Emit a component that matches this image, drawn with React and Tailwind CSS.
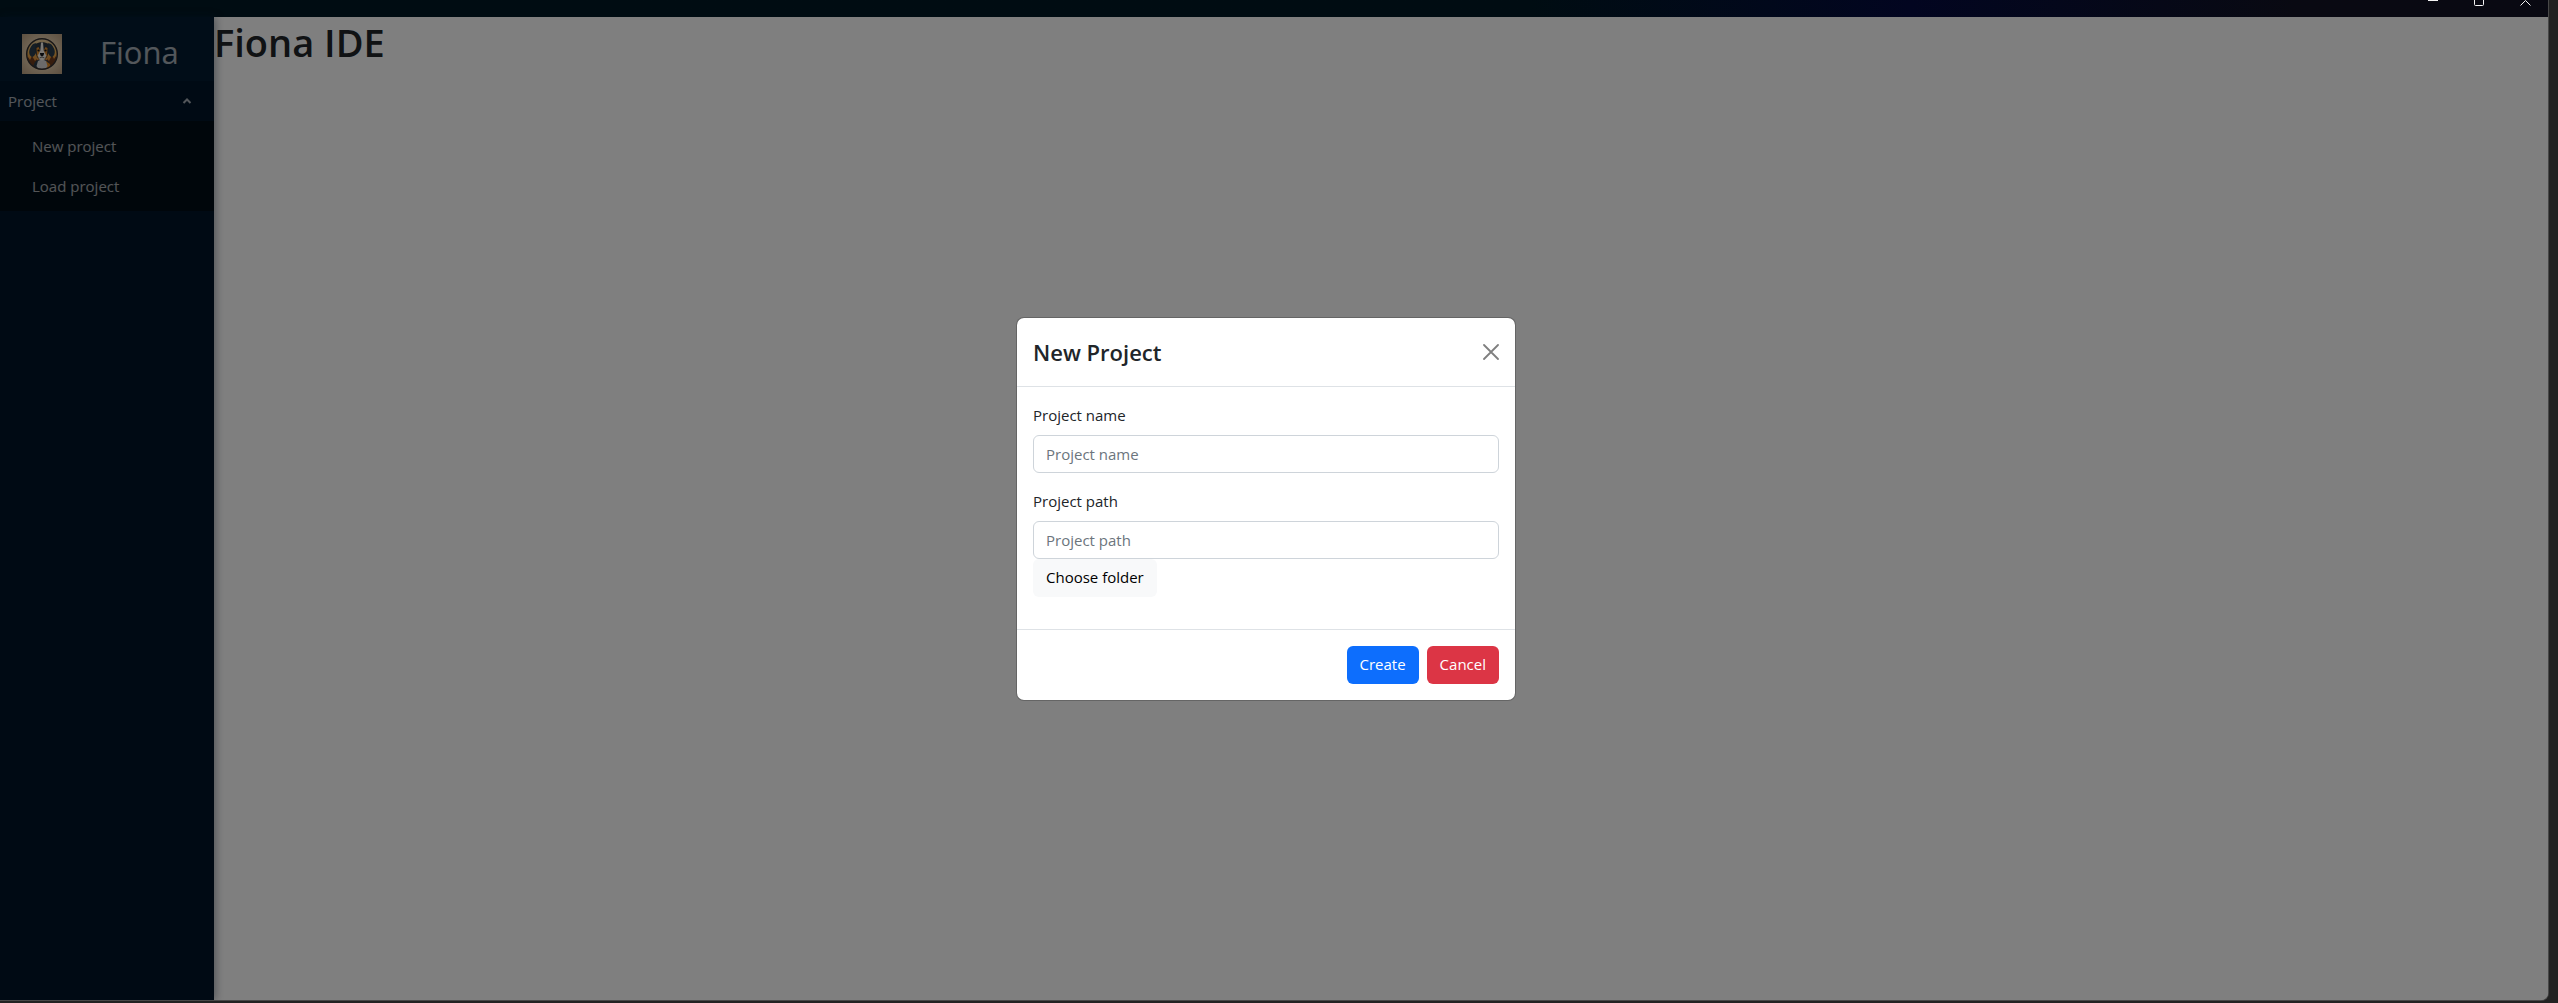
import React from "react";

function DogLogo() {
  return (
    <svg viewBox="0 0 40 40" className="size-10 shrink-0" role="img" aria-label="Fiona logo">
      <defs>
        <radialGradient id="paper" cx="50%" cy="50%" r="75%">
          <stop offset="0%" stopColor="#f0dabb" />
          <stop offset="55%" stopColor="#dcc4a4" />
          <stop offset="100%" stopColor="#b59a7c" />
        </radialGradient>
        <linearGradient id="sunset" x1="0" y1="0" x2="0" y2="1">
          <stop offset="0%" stopColor="#e8cfa4" />
          <stop offset="45%" stopColor="#eeb050" />
          <stop offset="100%" stopColor="#c8621a" />
        </linearGradient>
        <clipPath id="disc">
          <circle cx="20" cy="20" r="15" />
        </clipPath>
      </defs>
      <rect width="40" height="40" fill="url(#paper)" />
      <circle cx="20" cy="20" r="15.3" fill="url(#sunset)" />
      <g clipPath="url(#disc)">
        <path d="M4 27l2-4 2 3 2-4 3 5 2-2v12H4zM36 27l-2-5-2 3-2-4-3 6-2-2v12h11z" fill="#6e3a1c" />
        <path d="M11 36c0-7 3-11 9-11s9 4 9 11z" fill="#2c3b49" />
        <path d="M24 27l4 3 1 5-5 1z" fill="#e08a26" />
        <path d="M16 27l4-2 4 2 1.500 5-2.500 4h-6l-2.500-4z" fill="#d6d4d4" />
      </g>
      <path d="M14.500 9.500c-3-1-5 2-6.500 5-1.500 3-1 7 2 8.500 3-.5 4-4 5-8zM25.500 9.500c3-1 5 2 6.500 5 1.500 3 1 7-2 8.500-3-.5-4-4-5-8z" fill="#2a3d4c" />
      <path d="M14 10c2-2.500 10-2.500 12 0 1.500 4 1 9-1 13-2 3-8 3-10 0-2-4-2.500-9-1-13z" fill="#2a343e" />
      <path d="M14.500 14l2-1 1.500 3-1 8-2-2zM25.500 14l-2-1-1.500 3 1 8 2-2z" fill="#de8b2c" />
      <path d="M19 8.500h2l.7 8 2.500 5-1.500 4-2.700 1-2.700-1-1.500-4 2.500-5z" fill="#f7f2ea" />
      <circle cx="16.500" cy="16.500" r="1.100" fill="#0c1014" />
      <circle cx="23.500" cy="16.500" r="1.100" fill="#0c1014" />
      <path d="M17.800 19h4.400l-.7 2.500-1.500 1-1.500-1z" fill="#15191d" />
      <path d="M17.500 24l2.500-1 2.500 1" fill="none" stroke="#4a4a4a" strokeWidth=".8" />
      <circle cx="20" cy="20" r="15.300" fill="none" stroke="#332f30" strokeWidth="1.500" />
    </svg>
  );
}

function TitleBar() {
  return (
    <header className="flex h-[17px] shrink-0 items-start justify-end bg-linear-to-r from-[#000c12] from-60% via-[#020520] via-75% to-[#090912] to-90% pr-4">
      <svg viewBox="0 0 104 7" className="h-[7px] w-[104px]" fill="none" stroke="#f4f4f4" aria-hidden="true">
        <path d="M0 .5h10" />
        <path d="M46.500 0v4.500a1 1 0 0 0 1 1h7a1 1 0 0 0 1-1V0" />
        <path d="M92.500 5.500l5-5 5 5" />
      </svg>
    </header>
  );
}

function Sidebar() {
  return (
    <aside className="z-10 w-[214px] shrink-0 bg-[#001529] text-white/65 shadow-[2px_0_8px_rgba(0,21,41,0.35)]">
      <div className="flex h-16 items-start bg-[#031b30] pt-[17px] pl-[22px]">
        <DogLogo />
        <span className="pl-[38px] text-[31px] leading-9">Fiona</span>
      </div>
      <nav>
        <button type="button" aria-expanded="true" className="flex h-10 w-full items-center justify-between pr-[22px] pl-2">
          Project
          <svg viewBox="0 0 10 6" className="h-1.5 w-2.5" fill="none" stroke="currentColor" strokeWidth="2" aria-hidden="true">
            <path d="M1.500 5L5 1.500 8.500 5" />
          </svg>
        </button>
        <ul className="bg-[#000c17] py-[5px]">
          {["New project", "Load project"].map((item) => (
            <li key={item}>
              <a href="#" className="flex h-10 items-center pl-8">{item}</a>
            </li>
          ))}
        </ul>
      </nav>
    </aside>
  );
}

function Field({ id, label, children }) {
  return (
    <div>
      <label htmlFor={id} className="mb-2 block leading-6">{label}</label>
      <input
        id={id}
        type="text"
        placeholder={label}
        className="block h-[38px] w-full rounded-md border border-[#ced4da] bg-white px-3 leading-6 placeholder:text-[#6c757d]"
      />
      {children}
    </div>
  );
}

function NewProjectDialog() {
  return (
    <div className="absolute inset-0 z-20 flex items-center justify-center bg-black/50 pr-4">
      <section role="dialog" aria-labelledby="dialog-title" className="w-full max-w-[500px] rounded-lg border border-black/20 bg-white bg-clip-padding">
        <header className="flex items-center justify-between border-b border-[#dee2e6] p-4">
          <h2 id="dialog-title" className="text-[22px] leading-9 font-semibold">New Project</h2>
          <button type="button" aria-label="Close" className="text-black/50">
            <svg viewBox="0 0 16 16" className="size-4" fill="none" stroke="currentColor" strokeWidth="1.800" strokeLinecap="round">
              <path d="M1 1l14 14M15 1L1 15" />
            </svg>
          </button>
        </header>
        <form>
          <div className="flex flex-col gap-4 px-4 pt-4 pb-8">
            <Field id="project-name" label="Project name" />
            <Field id="project-path" label="Project path">
              <button type="button" className="block h-[38px] rounded-md bg-[#f8f9fa] px-[13px] text-black">Choose folder</button>
            </Field>
          </div>
          <footer className="flex justify-end gap-2 border-t border-[#dee2e6] p-4 text-white">
            <button type="button" className="h-[38px] rounded-md bg-[#0d6efd] px-[13px]">Create</button>
            <button type="button" className="h-[38px] rounded-md bg-[#dc3545] px-[13px]">Cancel</button>
          </footer>
        </form>
      </section>
    </div>
  );
}

export default function App() {
  return (
    <div className="h-screen overflow-hidden bg-[#222222] pr-[9px] pb-[2px] font-['Open_Sans',sans-serif] text-[15px] text-[#212529]">
      <div className="flex h-full flex-col overflow-hidden rounded-br-lg border-r border-b border-[#484848]">
        <TitleBar />
        <div className="relative flex min-h-0 flex-1">
          <Sidebar />
          <main className="flex-1 bg-white">
            <h1 className="text-[38px] leading-[50px] font-semibold">Fiona IDE</h1>
          </main>
          <NewProjectDialog />
        </div>
      </div>
    </div>
  );
}
